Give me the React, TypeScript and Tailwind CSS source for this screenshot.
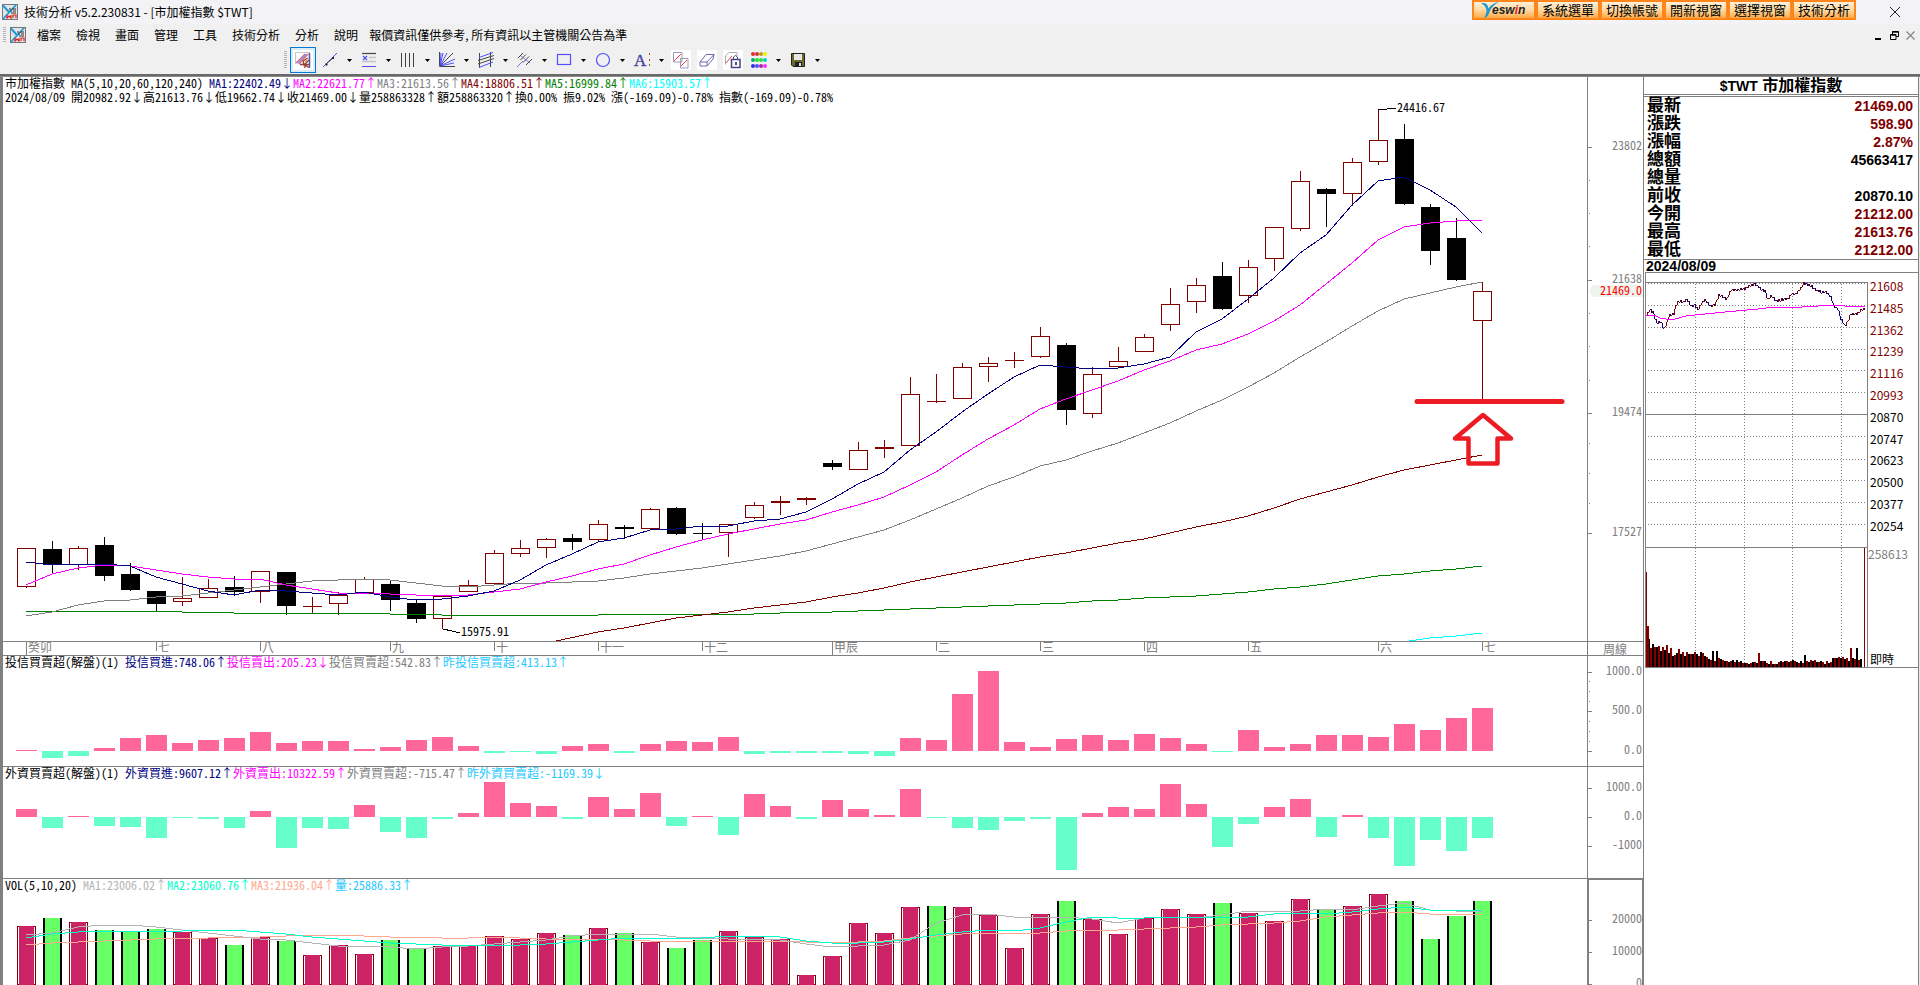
import type { ReactNode } from "react";

type Candle = [high: number, top: number, bottom: number, low: number, kind: "R" | "K"];

const X0 = 26;
const STEP = 26;
const xAt = (i: number) => X0 + STEP * i;

const candles: Candle[] = [
  [548, 548, 586, 588, "R"], [541, 549, 564, 574, "K"], [546, 548, 564, 570, "R"], [537, 545, 576, 581, "K"],
  [563, 574, 590, 590, "K"], [591, 591, 604, 611, "K"], [577, 598, 601, 606, "R"], [579, 588, 597, 597, "R"],
  [576, 587, 592, 596, "K"], [571, 571, 591, 603, "R"], [572, 572, 606, 615, "K"], [597, 606, 606, 614, "R"],
  [592, 595, 603, 615, "R"], [577, 579, 592, 592, "R"], [581, 584, 600, 611, "K"], [599, 603, 619, 623, "K"],
  [596, 596, 618, 629, "R"], [580, 585, 591, 591, "R"], [550, 553, 583, 583, "R"], [540, 548, 553, 557, "R"],
  [538, 539, 547, 558, "R"], [534, 538, 542, 550, "K"], [520, 524, 539, 542, "R"], [525, 527, 529, 539, "K"],
  [508, 509, 528, 529, "R"], [507, 508, 534, 535, "K"], [523, 533, 533, 539, "K"], [524, 524, 532, 557, "R"],
  [502, 505, 517, 519, "R"], [496, 501, 503, 515, "R"], [497, 498, 500, 505, "R"], [460, 463, 467, 470, "K"],
  [442, 450, 469, 469, "R"], [440, 447, 449, 458, "R"], [377, 394, 445, 445, "R"], [374, 401, 401, 403, "R"],
  [363, 367, 398, 398, "R"], [357, 363, 366, 382, "R"], [352, 360, 360, 368, "R"], [327, 336, 356, 358, "R"],
  [343, 345, 410, 425, "K"], [367, 374, 413, 418, "R"], [347, 361, 366, 366, "R"], [334, 337, 351, 351, "R"],
  [288, 304, 324, 331, "R"], [278, 285, 301, 313, "R"], [262, 276, 309, 309, "K"], [260, 267, 295, 303, "R"],
  [227, 227, 258, 271, "R"], [171, 181, 228, 231, "R"], [188, 189, 194, 227, "K"], [158, 162, 193, 206, "R"],
  [109, 140, 161, 165, "R"], [124, 139, 204, 205, "K"], [204, 207, 251, 265, "K"], [218, 238, 280, 280, "K"],
  [282, 291, 320, 399, "R"],
];

const ma5 = [562, 565, 564, 564, 566, 577, 584, 591, 595, 590, 591, 593, 595, 592, 597, 600, 599, 596, 591, 580, 565, 554, 542, 538, 530, 529, 526, 526, 521, 519, 512, 499, 484, 472, 450, 432, 412, 394, 377, 365, 367, 369, 368, 364, 357, 332, 319, 299, 278, 253, 235, 205, 181, 177, 190, 207, 233];
const ma10 = [585, 574, 568, 565, 566, 570, 574, 577, 579, 579, 585, 589, 593, 593, 594, 595, 595, 595, 592, 589, 582, 576, 569, 564, 555, 547, 540, 534, 529, 524, 520, 512, 505, 497, 485, 472, 455, 439, 425, 409, 399, 390, 381, 370, 361, 350, 344, 334, 321, 305, 284, 263, 240, 227, 223, 221, 220];
const ma20 = [616, 612, 605, 601, 600, 597, 596, 593, 590, 587, 584, 581, 580, 579, 580, 583, 586, 587, 585, 583, 583, 582, 581, 578, 574, 571, 568, 564, 560, 556, 551, 544, 537, 530, 520, 509, 498, 486, 477, 466, 460, 451, 443, 433, 423, 411, 400, 387, 373, 357, 342, 326, 311, 299, 293, 287, 282];
const ma60 = [632, 628, 623, 618, 615, 612, 608, 605, 602, 597, 593, 588, 582, 577, 572, 567, 562, 557, 553, 548, 543, 539, 533, 527, 522, 516, 508, 499, 492, 485, 477, 470, 465, 460, 455];
const ma120 = [612, 611, 611, 611, 611, 611, 612, 612, 613, 613, 613, 613, 613, 613, 614, 614, 615, 615, 615, 616, 615, 615, 615, 614, 614, 614, 614, 614, 614, 613, 612, 612, 611, 610, 609, 608, 607, 606, 605, 604, 603, 601, 600, 598, 597, 596, 594, 592, 589, 587, 584, 580, 576, 574, 571, 569, 566];

const trust = [1, -7, -5, 3, 13, 16, 8, 11, 13, 19, 8, 10, 10, 2, 4, 11, 14, 5, -2, -1, -3, 5, 7, -2, 7, 10, 9, 14, -3, -2, -2, -2, -3, -5, 13, 11, 57, 80, 9, 4, 12, 16, 11, 17, 13, 7, -1, 21, 4, 7, 16, 16, 14, 27, 21, 33, 43];
const foreign = [8, -11, 1, -9, -10, -21, -1, -2, -11, 6, -31, -11, -12, 12, -15, -21, -2, 4, 35, 14, 11, -2, 20, 8, 24, -9, 1, -18, 23, 11, -2, 17, 8, 2, 28, -1, -11, -13, -4, -2, -53, 4, 10, 8, 33, 13, -30, -7, 10, 18, -20, 2, -21, -49, -23, -34, -21];

const volumeTops = [926, 918, 922, 930, 931, 929, 932, 938, 945, 937, 941, 955, 945, 954, 940, 949, 946, 945, 936, 939, 933, 935, 928, 933, 942, 948, 940, 931, 937, 939, 975, 956, 923, 933, 907, 906, 907, 915, 948, 914, 901, 919, 934, 918, 909, 914, 903, 913, 921, 899, 909, 906, 894, 901, 939, 916, 901];
const volumeKinds = "RGRGGGRRGRGRRRGGRRRRRGRGRGGRRRRRRRRGRRRRGRRRRRGRRRGRRGGGG";
const vol5 = [935, 933, 927, 925, 925, 927, 930, 933, 936, 939, 940, 943, 946, 946, 947, 949, 947, 946, 944, 942, 940, 936, 934, 934, 934, 937, 938, 939, 939, 940, 944, 947, 946, 945, 940, 923, 915, 914, 917, 918, 917, 919, 923, 918, 917, 918, 915, 911, 912, 911, 909, 910, 906, 903, 910, 911, 911];
const vol10 = [938, 934, 932, 931, 931, 931, 931, 930, 930, 932, 934, 937, 939, 941, 943, 944, 945, 946, 945, 945, 944, 942, 940, 938, 938, 938, 938, 936, 936, 937, 941, 943, 943, 942, 939, 935, 932, 930, 931, 928, 922, 917, 918, 918, 917, 918, 917, 917, 914, 913, 914, 912, 909, 907, 910, 910, 910];
const vol20 = [945, 943, 942, 941, 940, 939, 938, 938, 937, 937, 936, 935, 935, 936, 937, 937, 938, 938, 937, 938, 939, 939, 939, 940, 941, 941, 941, 941, 941, 941, 942, 943, 942, 941, 938, 936, 934, 933, 934, 933, 931, 930, 930, 929, 928, 927, 925, 924, 923, 921, 917, 915, 913, 912, 914, 914, 914];

const months: [number, string][] = [
  [0, "癸卯"], [5, "七"], [9, "八"], [14, "九"], [18, "十"], [22, "十一"], [26, "十二"],
  [31, "甲辰"], [35, "二"], [39, "三"], [43, "四"], [47, "五"], [52, "六"], [56, "七"],
];

const linePoints = (ys: number[], from = 0) => ys.map((y, k) => `${xAt(k + from)},${y}`).join(" ");

const dataFont = "font-['Noto_Sans_Mono_CJK_TC','Noto_Sans_CJK_TC',monospace]";

function Line({ ys, from = 0, color }: { ys: number[]; from?: number; color: string }) {
  return <polyline points={linePoints(ys, from)} fill="none" stroke={color} strokeWidth="1" />;
}

/* Plot area whose drawing units are window pixels, starting at the given top. */
function Plot({ top, className, label, children }: { top: number; className: string; label: string; children: ReactNode }) {
  return (
    <svg className={`block w-full ${className}`} role="img" aria-label={label} shapeRendering="crispEdges">
      <g transform={`translate(-3 ${-top})`}>{children}</g>
    </svg>
  );
}

type AxisMark = [y: number, label: string];

function Axis({ top, className, marks, minor = [], children }: { top: number; className: string; marks: AxisMark[]; minor?: number[]; children?: ReactNode }) {
  return (
    <svg className={`block w-14 shrink-0 border-l border-[#808080] ${className}`} shapeRendering="crispEdges">
      <g transform={`translate(0 ${-top})`}>
        {marks.map(([y, label]) => (
          <g key={label}>
            <rect x="0" y={y} width="4" height="1" fill="#808080" />
            <text x="54" y={y + 3} textAnchor="end" fontSize="12" fill="#808080">{label}</text>
          </g>
        ))}
        {minor.map((y) => <rect key={y} x="1" y={y} width="1" height="1" fill="#808080" />)}
        {children}
      </g>
    </svg>
  );
}

function Legend({ items }: { items: [text: string, color: string][] }) {
  return (
    <p className="h-3.5 pl-0.5 text-xs leading-3 whitespace-pre">
      {items.map(([text, color]) => <span key={text} className={color}>{text}</span>)}
    </p>
  );
}

function Bars({ values, base }: { values: number[]; base: number }) {
  return (
    <>
      {values.map((v, i) => (
        <rect key={i} x={xAt(i) - 10} y={v > 0 ? base - v : base} width="21" height={Math.abs(v)} fill={v > 0 ? "#ff6699" : "#66ffcc"} />
      ))}
    </>
  );
}

function PriceChart() {
  return (
    <Plot top={105} className="h-[536px] overflow-visible" label="週線圖">
      {candles.map(([high, top, bottom, low, kind], i) => {
        const x = xAt(i);
        const color = kind === "R" ? "#800000" : "#000000";
        return (
          <g key={i}>
            <rect x={x} y={high} width="1" height={Math.max(top - high, 0)} fill={color} />
            <rect x={x} y={bottom} width="1" height={Math.max(low - bottom, 1)} fill={color} />
            {kind === "R" && bottom - top > 2
              ? <rect x={x - 8.5} y={top + 0.5} width="18" height={bottom - top} fill="#fff" stroke={color} />
              : <rect x={x - 9} y={top} width="19" height={Math.max(bottom - top, 1)} fill={color} />}
          </g>
        );
      })}
      <Line ys={ma120} color="#008000" />
      <polyline points={`556,641 ${linePoints(ma60, 22)}`} fill="none" stroke="#800000" />
      <Line ys={ma20} color="#808080" />
      <Line ys={ma10} color="#ff00ff" />
      <Line ys={ma5} color="#000080" />
      <polyline points="1409,641 1430,638 1456,636 1482,633" fill="none" stroke="#00ffff" />
      <polyline points="1378,109 1387,109 1388,108 1396,108" fill="none" stroke="#000" />
      <text x="1397" y="112" fontSize="12">24416.67</text>
      <polyline points="443,629 452,631 460,633" fill="none" stroke="#000" />
      <text x="461" y="636" fontSize="12">15975.91</text>
      <g fill="none" stroke="#ed1c24" shapeRendering="auto" strokeLinejoin="round" strokeLinecap="round">
        <path d="M1417 401.500H1562" strokeWidth="5" />
        <path d="M1483 415L1455 438.500H1468.500V463.500H1497.500V438.500H1511Z" strokeWidth="4.500" />
      </g>
    </Plot>
  );
}

function MonthScale() {
  return (
    <Plot top={642} className="h-[13px] overflow-visible" label="月份">
      {months.map(([i, name]) => (
        <g key={i} fill="#808080">
          <rect x={xAt(i)} y="642" width="1" height={name === "癸卯" || name === "甲辰" ? 13 : 9} />
          <text x={xAt(i) + 2} y="652" fontSize="12">{name}</text>
        </g>
      ))}
    </Plot>
  );
}

function VolumeChart() {
  return (
    <Plot top={893} className="h-[92px]" label="成交量">
      {volumeTops.map((top, i) => {
        const x = xAt(i) - 9;
        const h = 985 - top;
        return volumeKinds[i] === "R" ? (
          <g key={i}>
            <rect x={x + 0.5} y={top + 0.5} width="18" height={h - 1} fill="#fff" stroke="#800000" />
            <rect x={x + 2} y={top} width="15" height={h} fill="#cc2266" />
          </g>
        ) : (
          <g key={i}>
            <rect x={x} y={top} width="19" height={h} fill="#000" />
            <rect x={x + 2} y={top} width="15" height={h} fill="#66ff66" />
          </g>
        );
      })}
      <Line ys={vol20} color="#ffa890" />
      <Line ys={vol5} color="#b4b4b4" />
      <Line ys={vol10} color="#00ffcc" />
    </Plot>
  );
}

const intraday = [[1, 42], [4, 37], [7, 39], [11, 50], [15, 49], [18, 56], [21, 50], [23, 43], [28, 41], [30, 32], [33, 28], [37, 29], [41, 26], [45, 33], [49, 32], [52, 37], [55, 31], [59, 27], [65, 33], [69, 32], [73, 22], [81, 26], [85, 17], [91, 17], [98, 16], [103, 13], [109, 11], [115, 16], [119, 18], [122, 26], [126, 23], [130, 28], [143, 25], [145, 21], [150, 21], [155, 15], [158, 10], [165, 13], [170, 17], [175, 19], [180, 19], [185, 24], [188, 33], [192, 36], [195, 46], [199, 53], [202, 48], [205, 41], [211, 41], [215, 37], [219, 36]];

const ticks: [number, number][] = [];
for (let x = 1; x <= 219; x++) {
  const k = Math.max(1, intraday.findIndex((p) => p[0] >= x));
  const [xa, ya] = intraday[k - 1];
  const [xb, yb] = intraday[k];
  const y = ya + ((yb - ya) * (x - xa)) / (xb - xa);
  ticks.push([x, Math.round(y + 1 + Math.sin(x * 2.3) * 1.4)]);
}

const flow = Array.from({ length: 108 }, (_, i) => {
  const noise = Math.abs(Math.sin(i * 12.9898) * 43758.5453) % 1;
  const base = i < 50 ? 3 + 18 * Math.exp(-i / 16) : i > 92 ? 6 : 3;
  const spike = i % 23 === 10 || i === 35 || i === 105 ? 9 : 0;
  return Math.round(base + noise * (i < 30 ? 9 : 4) + spike);
});

const quoteScale: [string, boolean][] = [
  ["21608", true], ["21485", true], ["21362", true], ["21239", true], ["21116", true], ["20993", true],
  ["20870", false], ["20747", false], ["20623", false], ["20500", false], ["20377", false], ["20254", false],
];

function Intraday() {
  return (
    <svg className="block h-[397px] w-full" role="img" aria-label="即時走勢" shapeRendering="crispEdges">
      <g fill="none" stroke="#808080">
        {[11, 33, 55, 77, 98, 120, 164, 187, 208, 230, 252].map((y) => (
          <path key={y} d={`M4 ${y + 0.5}H224`} strokeDasharray="1 2" />
        ))}
        {[51, 100, 148, 197].map((x) => <path key={x} d={`M${x + 0.5} 12V394`} strokeDasharray="1 2" />)}
        <path d="M1.500 0V396M1 10.500H224M223.500 10V396M1 142.500H224M1 275.500H224M1 395.500H274M1 0.500H274" />
      </g>
      {ticks.slice(1).map(([x, y], i) => {
        const prev = ticks[i][1];
        return <rect key={x} x={x + 1} y={Math.min(prev, y)} width="1" height={Math.max(1, Math.abs(y - prev))} fill={y > prev ? "#000080" : "#800000"} />;
      })}
      <polyline points="2,43 10,43 16,46 22,47 31,47 42,44 61,42 81,40 114,37 131,35 158,35 174,34 187,33 201,34 221,34" fill="none" stroke="#ff00ff" />
      {flow.map((h, i) => <rect key={i} x={2 + i * 2} y={395 - h} width="2" height={h} fill={i % 2 === 1 ? "#000" : "#800000"} />)}
      <rect x="2" y="300" width="1" height="95" fill="#800000" />
      <rect x="3" y="354" width="2" height="41" fill="#800000" />
      <rect x="220" y="276" width="1" height="119" fill="#800000" />
      {quoteScale.map(([label, up], i) => (
        <text key={label} x="226" y={19 + Math.round(i * 21.8)} fontSize="12" fill={up ? "#800000" : "#000"}>{label}</text>
      ))}
      <text x="224" y="287" fontSize="12" fill="#808080">258613</text>
      <text x="226" y="392" fontSize="12">即時</text>
    </svg>
  );
}

const quotes: [string, string, string][] = [
  ["最新", "21469.00", "text-[#800000]"], ["漲跌", "598.90", "text-[#800000]"], ["漲幅", "2.87%", "text-[#800000]"],
  ["總額", "45663417", "text-black"], ["總量", "", "text-black"], ["前收", "20870.10", "text-black"],
  ["今開", "21212.00", "text-[#800000]"], ["最高", "21613.76", "text-[#800000]"], ["最低", "21212.00", "text-[#800000]"],
];

function QuotePanel() {
  return (
    <aside className="flex w-[277px] shrink-0 border-l border-[#808080] bg-[#e8e8e8]">
      <div className="w-[275px] border-r border-[#808080] bg-white">
        <h2 className="flex h-[17px] items-center justify-center font-['Liberation_Sans','Noto_Sans_CJK_TC',sans-serif] text-base leading-4 font-bold whitespace-pre">
          <span className="text-sm leading-4">$TWT</span> 市加權指數
        </h2>
        <div className="h-[3px] border-y border-[#808080]" />
        <table className="w-full border-collapse font-['Liberation_Sans','Noto_Sans_CJK_TC',sans-serif] font-bold">
          <tbody>
            {quotes.map(([name, value, color]) => (
              <tr key={name} className="h-[18px]">
                <th scope="row" className="p-0 pl-[3px] text-left text-[17px] leading-[18px]">{name}</th>
                <td className={`p-0 pr-[5px] text-right text-sm leading-[18px] ${color}`}>{value}</td>
              </tr>
            ))}
          </tbody>
        </table>
        <p className="h-[13px] border-t border-[#808080] pl-0.5 font-['Liberation_Sans',sans-serif] text-sm leading-3 font-bold">2024/08/09</p>
        <Intraday />
      </div>
    </aside>
  );
}

function AppIcon() {
  return (
    <svg className="size-4 shrink-0" viewBox="0 0 16 16" aria-hidden="true">
      <rect x=".5" y=".5" width="15" height="15" fill="#e4e4e4" stroke="#777" />
      <path d="M1 15L14 1" stroke="#1a9ad6" strokeWidth="1.800" />
      <path d="M1 1.500L7 8" stroke="#1a9ad6" strokeWidth="2" />
      <path d="M8 4v2M10 5h4M8 7h2M11 7h3M9 9h5" stroke="#333" strokeWidth="1" />
      <path d="M5 11v3l2-2 2 2v-3M11 14v-3h3v3" fill="none" stroke="#d22" strokeWidth="1.200" />
    </svg>
  );
}

const windowButtons = ["系統選單", "切換帳號", "開新視窗", "選擇視窗", "技術分析"];
const orange = "flex h-5 w-16 items-center justify-center border-2 border-[#ff8419] bg-linear-to-b from-[#ffefd8] via-[#ffd9a0] to-[#ffa940] text-[13px] leading-4 text-black";

function TitleBar() {
  return (
    <header className="flex h-6 items-center bg-[#f3f3f6] pl-0.5 text-xs">
      <AppIcon />
      <h1 className="ml-1.5 flex-1 truncate">技術分析 v5.2.230831 - [市加權指數 $TWT]</h1>
      <div className="flex h-6 items-start">
        <button className={orange} aria-label="Yeswin">
          <svg className="h-4 w-12" viewBox="0 0 48 16">
            <path d="M1 1.500C5 0 8 2 8.500 6.500C11 3 14 .5 19 0C14 2.500 11 6 9.500 10C8.500 13 7 15.500 4 16C5.500 13.500 6.500 11 6.500 8.500C6 5 4 2.500 1 1.500z" fill="#1a9ad6" />
            <text x="12" y="12" fontSize="12" fontWeight="bold" fontStyle="italic" fontFamily="Liberation Sans" fill="#222">esw<tspan fill="#d22">i</tspan>n</text>
          </svg>
        </button>
        {windowButtons.map((name) => <button key={name} className={orange}>{name}</button>)}
      </div>
      <button aria-label="關閉" className="mr-[19px] ml-[33px] flex size-3 items-center justify-center">
        <svg className="size-2.5" viewBox="0 0 10 10"><path d="M0 0L10 10M10 0L0 10" stroke="#222" /></svg>
      </button>
    </header>
  );
}

const menus = ["檔案", "檢視", "畫面", "管理", "工具", "技術分析", "分析", "說明"];

function MenuBar() {
  return (
    <nav className="flex h-[22px] items-center bg-[#f0f0f0] text-xs">
      <span className="mr-1 ml-[3px] h-4 w-[3px] bg-[repeating-linear-gradient(#b4b4b4_0_1px,transparent_1px_2px)]" />
      <AppIcon />
      <ul className="ml-[11px] flex gap-[15px]">
        {menus.map((name) => <li key={name}><button>{name}</button></li>)}
      </ul>
      <p className="ml-[11px] flex-1 truncate">報價資訊僅供參考, 所有資訊以主管機關公告為準</p>
      <div className="mr-[5px] flex gap-[7px]">
        <button aria-label="最小化"><svg className="size-[9px]" viewBox="0 0 9 9"><path d="M1 8H7" stroke="#000" strokeWidth="2" /></svg></button>
        <button aria-label="還原"><svg className="size-[9px]" viewBox="0 0 9 9" fill="none" stroke="#000"><path d="M2.500 3V.5h6v5H6M2 1.200h7M.5 3.500h5.500v5H.5zM0 4.200h6" /></svg></button>
        <button aria-label="關閉子視窗"><svg className="size-[9px]" viewBox="0 0 9 9"><path d="M.5.5l8 8M8.500.5l-8 8" stroke="#888" strokeWidth="1.300" /></svg></button>
      </div>
    </nav>
  );
}

function Tool({ label, arrow, white, children }: { label: string; arrow?: boolean; white?: boolean; children: ReactNode }) {
  return (
    <div className="flex items-center">
      <button aria-label={label} className="flex h-[26px] w-[26px] items-center justify-center">
        <svg className={white ? "size-5 bg-white" : "size-5"} viewBox="-2 -2 20 20" fill="none">{children}</svg>
      </button>
      {arrow && (
        <button aria-label={`${label}選項`} className="flex h-[26px] w-[13px] items-center justify-center">
          <svg className="h-[3px] w-[5px]" viewBox="0 0 5 3"><path d="M0 0h5L2.500 3z" fill="#000" /></svg>
        </button>
      )}
    </div>
  );
}

const palette = ["#e03030", "#e03030", "#b0a030", "#f0f000", "#00b070", "#30e030", "#30e030", "#00d0d0", "#3030e0", "#5050ff", "#a030a0", "#ff30ff"];

function Toolbar() {
  return (
    <div role="toolbar" aria-label="繪圖工具" className="flex h-7 items-center bg-[#f0f0f0] pl-[284px]">
      <span className="mr-[3px] h-[18px] w-[3px] bg-[repeating-linear-gradient(#b4b4b4_0_1px,transparent_1px_2px)]" />
      <button aria-label="繪圖" aria-pressed="true" className="mr-px flex size-[26px] items-center justify-center border border-[#0078d7] bg-[#dcebf8]">
        <svg className="size-5 bg-white" viewBox="-2 -2 20 20" fill="none">
          <path d="M0 .5H15M.5 0V12" stroke="#c8c8c8" />
          <path d="M1 11L10 2M4 12L13 2" stroke="#f06060" strokeWidth="1.200" />
          <path d="M2.500 11.500L11.500 2" stroke="#6a8cff" strokeWidth="1.200" />
          <path d="M14.500 1V16" stroke="#4a5a9a" strokeWidth="1.500" />
          <path d="M5 12.500H14M8 9L13 6M8 9L9 13L14 8M10 16V13L14 15.500" stroke="#96413a" strokeWidth="1.400" />
          <path d="M10 10L12 8" stroke="#e8a030" strokeWidth="1.400" />
        </svg>
      </button>
      <Tool label="直線" arrow>
        <path d="M1 15L15 1" stroke="#5050ff" /><path d="M3.500 11.500h2v2h-2zM10 5h2v2h-2z" fill="#222" /><path d="M4 12L11 6" stroke="#333" />
      </Tool>
      <Tool label="文字列" arrow>
        <path d="M1 1.500H15" stroke="#444" strokeWidth="1.200" /><path d="M8 5.500H15M1 9.500H15" stroke="#c4c4c4" strokeWidth="1.500" /><path d="M2 4l4 4M6 4L2 8M1 14.500H15" stroke="#5050ff" strokeWidth="1.200" />
      </Tool>
      <Tool label="週期線" arrow>
        <path d="M1.500 1V15M5.500 1V15M9.500 1V15M13.500 1V15" stroke="#444" shapeRendering="crispEdges" />
      </Tool>
      <Tool label="扇形線" arrow>
        <path d="M.5 0V14.500H16" stroke="#444" /><path d="M1 14L4 1M1 14L8 1M1 14L16 7M1 14L15 11M1 14L2 1" stroke="#5050ff" /><path d="M1 14L14 1" stroke="#444" />
      </Tool>
      <Tool label="通道線" arrow>
        <path d="M1.500 1V16M12.500 0V15" stroke="#444" /><path d="M0 8.500L16 3.500M0 12L16 6.500" stroke="#444" /><path d="M1 5.500L15 .5M1 15.500L15 10" stroke="#5050ff" />
      </Tool>
      <Tool label="叉線" arrow>
        <path d="M1 6L6 1M3.500 8L9 2.500M6 10.500L12 4.500M9 13L15 7" stroke="#444" /><path d="M4 4L13 11M0 15L6 9" stroke="#7a7ad0" />
      </Tool>
      <Tool label="矩形" arrow><rect x="1.500" y="2.500" width="13" height="10" stroke="#5050ff" strokeWidth="1.200" /></Tool>
      <Tool label="橢圓" arrow><circle cx="8" cy="8" r="6.500" stroke="#5050ff" strokeWidth="1.200" /></Tool>
      <Tool label="文字" arrow>
        <text x="0" y="14" fontSize="17" fontFamily="Liberation Serif" fill="#4646a0" stroke="#4646a0" strokeWidth=".4">A</text>
        <path d="M15.500 1v2M15.500 7v2M15.500 12v2" stroke="#c04040" />
      </Tool>
      <Tool label="複製" white>
        <path d="M.5.500H9V10H.5zM7.500 6.500H15V16H7.500z" stroke="#9a9ab8" /><path d="M1 9L8 2M8 14L14 8" stroke="#f04040" />
      </Tool>
      <Tool label="橡皮擦" white>
        <path d="M1 10L7 2.500H15L14 7L8 14H1ZM1 10H8L15 2.500M8 10V14" stroke="#6a6ab0" />
      </Tool>
      <Tool label="鎖定" white>
        <path d="M.5 12.500V4L4 .5H12V4" stroke="#b0b0b8" /><path d="M1 11L7 4" stroke="#f04040" /><path d="M6.500 7.500H15V15.500H6.500z" stroke="#46468c" strokeWidth="1.500" /><path d="M8.500 7V5q2-3 4 0V7" stroke="#46468c" /><path d="M10 10h2v3h-2z" fill="#46468c" />
      </Tool>
      <Tool label="顏色" arrow>
        {palette.map((color, i) => <circle key={i} cx={2 + (i % 4) * 4} cy={2 + Math.floor(i / 4) * 6} r="2" fill={color} />)}
      </Tool>
      <Tool label="儲存" arrow>
        <path d="M1.500 1.500H14.500V14.500H3L1.500 13Z" fill="#6b6b2e" stroke="#222" /><path d="M4 2H12V8H4z" fill="#e8e8e8" /><path d="M5 10H12V15H5z" fill="#222" /><path d="M9 11h2v3H9z" fill="#ddd" />
      </Tool>
    </div>
  );
}

const panel = "flex border-b border-[#808080]";

export default function App() {
  return (
    <div className="flex min-h-screen flex-col bg-white font-['Noto_Sans_CJK_TC',sans-serif] text-black">
      <TitleBar />
      <MenuBar />
      <Toolbar />
      <div className="h-[3px] border-b border-[#8a8a8a] bg-[#696969]" />
      <main className="flex flex-1 border-l-[3px] border-[#808080]">
        <div className={`flex min-w-0 flex-1 flex-col ${dataFont}`}>
          <section className={panel} aria-label="市加權指數">
            <div className="min-w-0 flex-1">
              <Legend items={[
                ["市加權指數 MA(5,10,20,60,120,240) ", "text-black"], ["MA1:22402.49↓", "text-[#000080]"], ["MA2:22621.77↑", "text-[#ff00ff]"],
                ["MA3:21613.56↑", "text-[#808080]"], ["MA4:18806.51↑", "text-[#800000]"], ["MA5:16999.84↑", "text-[#008000]"], ["MA6:15903.57↑", "text-[#00ffff]"],
              ]} />
              <Legend items={[["2024/08/09 開20982.92↓高21613.76↓低19662.74↓收21469.00↓量258863328↑額258863320↑換0.00% 振9.02% 漲(-169.09)-0.78% 指數(-169.09)-0.78%", "text-black"]]} />
              <PriceChart />
            </div>
            <Axis top={77} className="h-[564px]" marks={[[147, "23802"], [280, "21638"], [413, "19474"], [533, "17527"]]} minor={[180, 213, 246, 313, 346, 380, 443, 473, 503]}>
              <path d="M1 291L5 285H55V297H5Z" fill="#eef5ee" />
              <text x="54" y="295" textAnchor="end" fontSize="12" fill="#ff0000">21469.0</text>
            </Axis>
          </section>
          <section className={panel} aria-label="時間軸">
            <div className="min-w-0 flex-1"><MonthScale /></div>
            <div className="h-[13px] w-14 shrink-0 border-l border-[#808080] pl-[15px] text-xs leading-[13px] text-[#808080]">周線</div>
          </section>
          <section className={panel} aria-label="投信買賣超">
            <div className="min-w-0 flex-1">
              <Legend items={[
                ["投信買賣超(解盤)(1) ", "text-black"], ["投信買進:748.06↑", "text-[#000080]"], ["投信賣出:205.23↓", "text-[#ff00ff]"],
                ["投信買賣超:542.83↑", "text-[#808080]"], ["昨投信買賣超:413.13↑", "text-[#1ec8ff]"],
              ]} />
              <Plot top={670} className="h-24" label="投信買賣超柱狀圖"><Bars values={trust} base={751} /></Plot>
            </div>
            <Axis top={656} className="h-[110px]" marks={[[672, "1000.0"], [711, "500.0"], [751, "0.0"]]} minor={[681, 691, 701, 721, 731, 741]} />
          </section>
          <section className={panel} aria-label="外資買賣超">
            <div className="min-w-0 flex-1">
              <Legend items={[
                ["外資買賣超(解盤)(1) ", "text-black"], ["外資買進:9607.12↑", "text-[#000080]"], ["外資賣出:10322.59↑", "text-[#ff00ff]"],
                ["外資買賣超:-715.47↑", "text-[#808080]"], ["昨外資買賣超:-1169.39↓", "text-[#1ec8ff]"],
              ]} />
              <Plot top={781} className="h-[97px]" label="外資買賣超柱狀圖"><Bars values={foreign} base={817} /></Plot>
            </div>
            <Axis top={767} className="h-[111px]" marks={[[788, "1000.0"], [817, "0.0"], [846, "-1000"]]} />
          </section>
          <section className="flex flex-1" aria-label="成交量">
            <div className="min-w-0 flex-1">
              <Legend items={[
                ["VOL(5,10,20) ", "text-black"], ["MA1:23006.02↑", "text-[#b4b4b4]"], ["MA2:23060.76↑", "text-[#00ffcc]"],
                ["MA3:21936.04↑", "text-[#ffa890]"], ["量:25886.33↑", "text-[#1ec8ff]"],
              ]} />
              <VolumeChart />
            </div>
            <Axis top={879} className="h-[106px]" marks={[[920, "20000"], [952, "10000"], [984, "0"]]}>
              <path d="M.500 985V879.500H54.500V985" fill="none" stroke="#808080" />
            </Axis>
          </section>
        </div>
        <QuotePanel />
      </main>
    </div>
  );
}
